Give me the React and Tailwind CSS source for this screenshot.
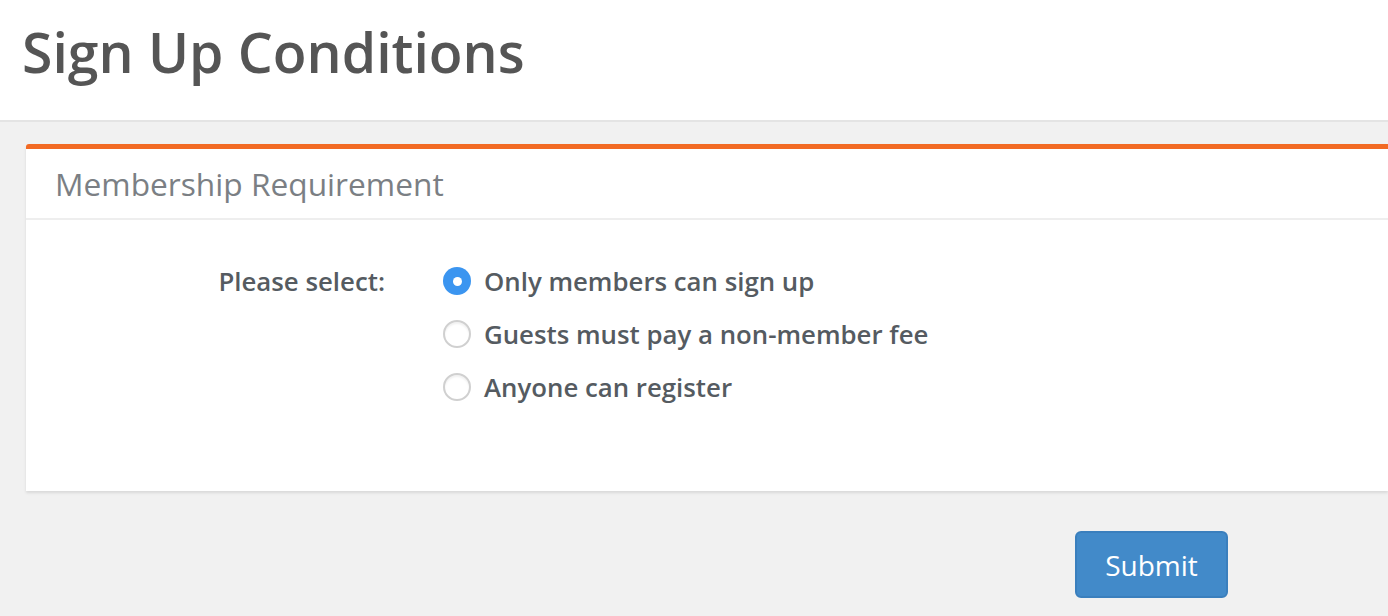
import React, { useState } from "react";

const options = [
  "Only members can sign up",
  "Guests must pay a non-member fee",
  "Anyone can register",
];

function Radio({ checked }) {
  if (checked) {
    return (
      <span className="flex h-[28px] w-[28px] shrink-0 items-center justify-center rounded-full bg-[#3b95f0]">
        <span className="h-[9px] w-[9px] rounded-full bg-white" />
      </span>
    );
  }
  return (
    <span className="h-[28px] w-[28px] shrink-0 rounded-full border-2 border-[#d0d0d0] bg-white shadow-[inset_0_2px_2px_rgba(0,0,0,0.06)]" />
  );
}

export default function App() {
  const [selected, setSelected] = useState(0);

  return (
    <div className="min-h-[616px] bg-[#f1f1f1] font-['Open_Sans',sans-serif]">
      <div className="h-[122px] border-b-2 border-[#e4e4e4] bg-white pl-[22px] pt-[14px]">
        <h1 className="text-[55.3px] font-semibold leading-[76px] text-[#555555]">
          Sign Up Conditions
        </h1>
      </div>

      <div className="pl-[26px] pt-[22px]">
        <div className="rounded-tl-[3px] border-t-[5px] border-[#f26a24] bg-white shadow-[0_2px_3px_rgba(0,0,0,0.1)]">
          <div className="h-[71px] border-b-2 border-[#eeeeee] pl-[29px] pt-[15px]">
            <h2 className="text-[31.7px] leading-[40px] text-[#7b7f84]">
              Membership Requirement
            </h2>
          </div>
          <div className="flex h-[271px] pt-[44px]">
            <div className="w-[359px] shrink-0 text-right">
              <span className="text-[25.8px] font-semibold leading-[34px] text-[#555b61]">
                Please select:
              </span>
            </div>
            <div className="ml-[58px] flex flex-col gap-[19px]">
              {options.map((label, i) => (
                <label
                  key={label}
                  onClick={() => setSelected(i)}
                  className="flex h-[34px] cursor-pointer items-center gap-[13px]"
                >
                  <Radio checked={selected === i} />
                  <span className="text-[25.8px] font-semibold leading-[34px] text-[#555b61]">
                    {label}
                  </span>
                </label>
              ))}
            </div>
          </div>
        </div>

        <div className="pl-[1049px] pt-[40px]">
          <button className="h-[67px] w-[153px] rounded-[6px] border-2 border-[#3a7fbd] bg-[#428ac9] text-[28px] text-white">
            Submit
          </button>
        </div>
      </div>
    </div>
  );
}
